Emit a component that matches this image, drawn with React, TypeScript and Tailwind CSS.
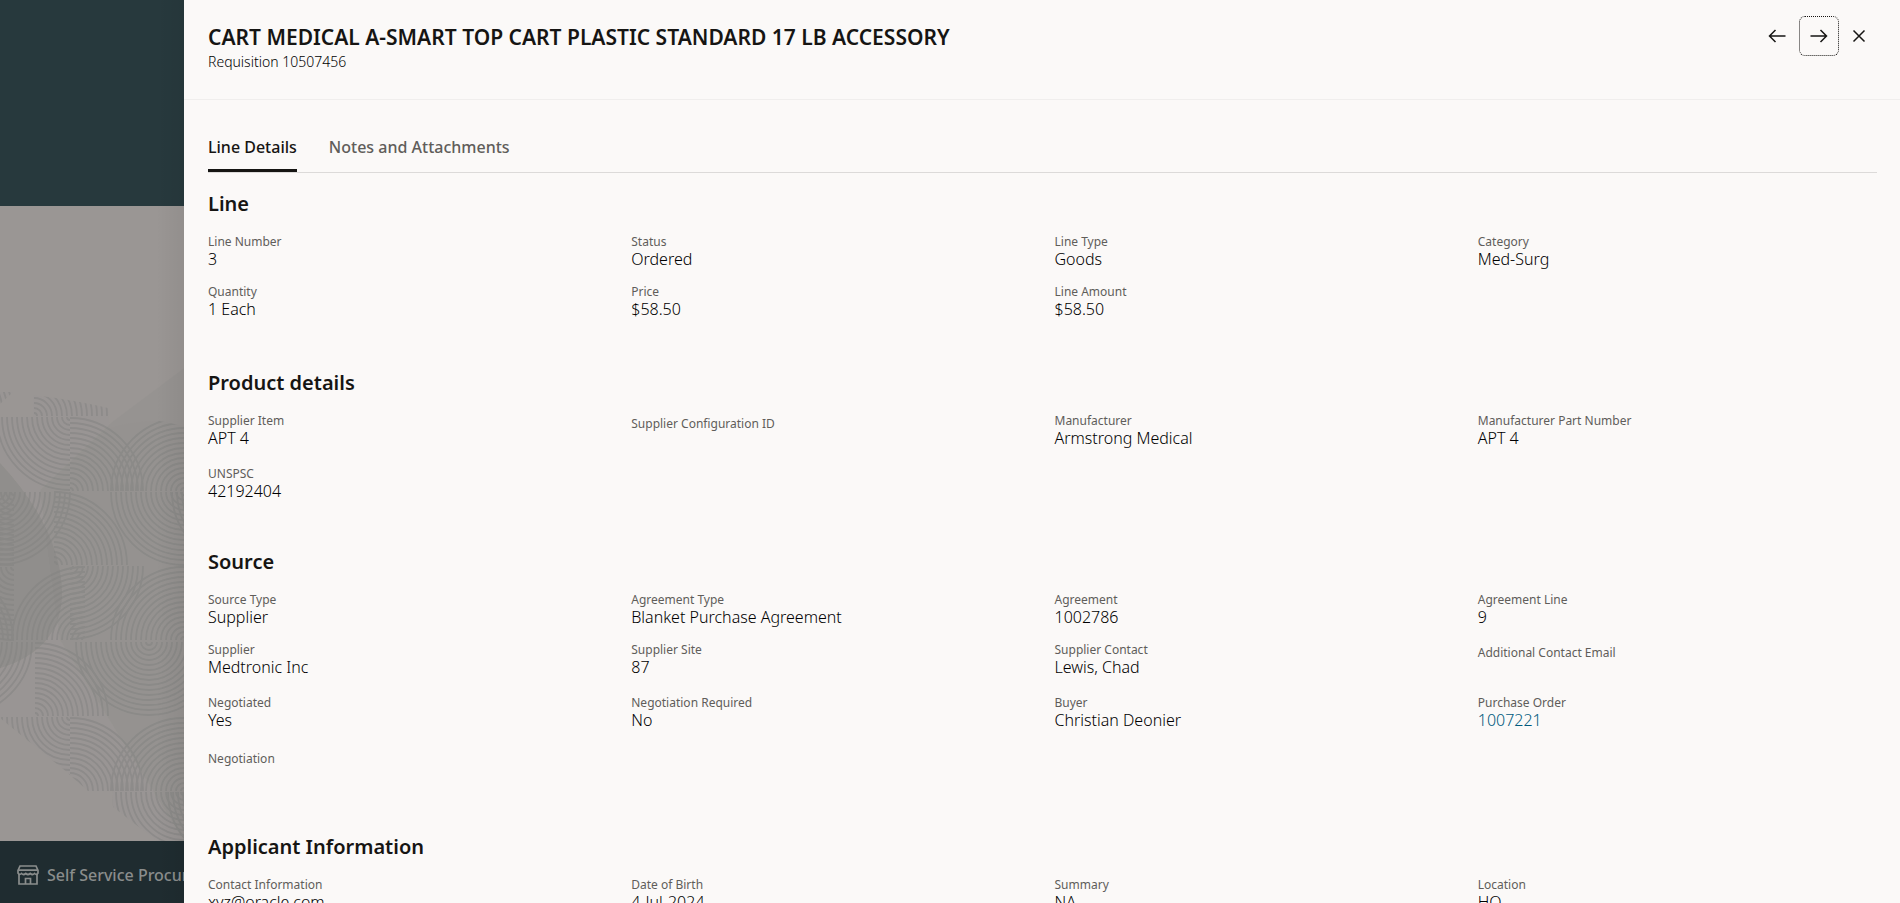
import { useState } from "react";

type Field = {
  label: string;
  value?: string;
  href?: string;
  tall?: boolean;
};

type SectionData = { title: string; fields: Field[] };

const sections: SectionData[] = [
  {
    title: "Line",
    fields: [
      { label: "Line Number", value: "3" },
      { label: "Status", value: "Ordered" },
      { label: "Line Type", value: "Goods" },
      { label: "Category", value: "Med-Surg" },
      { label: "Quantity", value: "1 Each", tall: true },
      { label: "Price", value: "$58.50", tall: true },
      { label: "Line Amount", value: "$58.50", tall: true },
    ],
  },
  {
    title: "Product details",
    fields: [
      { label: "Supplier Item", value: "APT 4" },
      { label: "Supplier Configuration ID" },
      { label: "Manufacturer", value: "Armstrong Medical" },
      { label: "Manufacturer Part Number", value: "APT 4" },
      { label: "UNSPSC", value: "42192404" },
    ],
  },
  {
    title: "Source",
    fields: [
      { label: "Source Type", value: "Supplier" },
      { label: "Agreement Type", value: "Blanket Purchase Agreement" },
      { label: "Agreement", value: "1002786" },
      { label: "Agreement Line", value: "9" },
      { label: "Supplier", value: "Medtronic Inc" },
      { label: "Supplier Site", value: "87" },
      { label: "Supplier Contact", value: "Lewis, Chad" },
      { label: "Additional Contact Email" },
      { label: "Negotiated", value: "Yes" },
      { label: "Negotiation Required", value: "No" },
      { label: "Buyer", value: "Christian Deonier" },
      { label: "Purchase Order", value: "1007221", href: "#purchase-order", tall: true },
      { label: "Negotiation" },
    ],
  },
  {
    title: "Applicant Information",
    fields: [
      { label: "Contact Information", value: "xyz@oracle.com" },
      { label: "Date of Birth", value: "4-Jul-2024" },
      { label: "Summary", value: "NA" },
      { label: "Location", value: "HQ" },
    ],
  },
];

type Quadrant = "ne" | "nw" | "se" | "sw";

// Quarter fans of concentric arcs: centre x, centre y, quadrant.
const fans: [number, number, Quadrant][] = [
  [-60, 416, "ne"],
  [34, 416, "ne"],
  [70, 417, "sw"],
  [70, 491, "ne"],
  [184, 491, "nw"],
  [-3, 492, "se"],
  [14, 492, "sw"],
  [54, 565, "ne"],
  [184, 492, "sw"],
  [245, 492, "sw"],
  [70, 566, "se"],
  [14, 567, "sw"],
  [85, 640, "nw"],
  [-60, 640, "ne"],
  [184, 640, "nw"],
  [-41, 642, "se"],
  [35, 716, "ne"],
  [149, 642, "sw"],
  [149, 642, "se"],
  [70, 717, "sw"],
  [70, 791, "ne"],
  [184, 791, "nw"],
  [184, 792, "sw"],
  [241, 792, "sw"],
];

const radii = [3, 8, 13, 18, 23, 28, 33, 38, 43, 48, 53, 58, 63, 68, 73];

function arc(cx: number, cy: number, r: number, q: Quadrant) {
  const sx = q === "ne" || q === "se" ? 1 : -1;
  const sy = q === "se" || q === "sw" ? 1 : -1;
  const sweep = sx * sy > 0 ? 1 : 0;
  return `M${cx + sx * r} ${cy}A${r} ${r} 0 0 ${sweep} ${cx} ${cy + sy * r}`;
}

function Pattern() {
  return (
    <svg
      className="block h-full w-full"
      viewBox="0 206 184 635"
      preserveAspectRatio="xMinYMin slice"
      aria-hidden="true"
    >
      <defs>
        <clipPath id="wave">
          <path d="M0 392H13L0 404V417H33V395Q75 400 108 408L110 428Q135 420 160 421L184 426V841H157L113 807L112 791H88L62 768L48 757L0 718Z" />
        </clipPath>
      </defs>
      <path d="M184 368L112 422L40 490L60 640L184 841Z" fill="#8f8e8b" opacity=".35" />
      <path d="M0 463Q62 530 62 595Q60 650 0 668Z" fill="#868684" opacity=".5" />
      <g clipPath="url(#wave)" fill="none" stroke="#838381" strokeWidth="1.8" opacity=".55">
        {fans.map(([cx, cy, q]) => (
          <path key={`${cx}-${cy}-${q}`} d={radii.map((r) => arc(cx, cy, r, q)).join("")} />
        ))}
      </g>
    </svg>
  );
}

function StoreIcon() {
  return (
    <svg
      className="h-5 w-[22px] shrink-0"
      viewBox="0 0 22 20"
      fill="none"
      stroke="currentColor"
      strokeWidth="1.7"
      aria-hidden="true"
    >
      <path d="M3 1H19L21 5.5V8Q19.5 10.5 17.5 8.5Q15.5 10.5 13.2 8.5Q11 10.5 8.8 8.5Q6.5 10.5 4.5 8.5Q2.5 10.5 1 8V5.5Z" />
      <path d="M1.5 5.2H20.5M2 9V19H20V9M8.5 19V13.5H13.5V19" />
    </svg>
  );
}

function Glyph({ d }: { d: string }) {
  return (
    <svg className="size-6" viewBox="0 0 24 24" fill="none" stroke="currentColor" strokeWidth="1.5" aria-hidden="true">
      <path d={d} />
    </svg>
  );
}

function FieldCell({ label, value, href, tall }: Field) {
  if (value === undefined) {
    return (
      <div className="min-h-[43px] pt-[3px]">
        <dt className="text-xs text-[#605d5a]">{label}</dt>
        <dd />
      </div>
    );
  }
  return (
    <div className={tall ? "min-h-[43px]" : "min-h-10"}>
      <dt className="text-xs text-[#605d5a]">{label}</dt>
      <dd className="text-base leading-[18px] font-light text-black">
        {href ? (
          <a href={href} className="text-[#005a7d]">
            {value}
          </a>
        ) : (
          value
        )}
      </dd>
    </div>
  );
}

const tabs = ["Line Details", "Notes and Attachments"];

export default function App() {
  const [active, setActive] = useState(tabs[0]);

  return (
    <div className="flex h-screen overflow-hidden bg-[#fbf9f8] font-['Noto_Sans','Open_Sans',sans-serif] text-[#161513]">
      <div className="relative flex w-[184px] shrink-0 flex-col overflow-hidden bg-[#9a9694]">
        <div className="h-[206px] shrink-0 bg-[#27393d]" />
        <div className="min-h-0 flex-1">
          <Pattern />
        </div>
        <div className="flex h-[62px] shrink-0 items-center gap-2 bg-[#1f2c30] pt-1.5 pl-[17px] whitespace-nowrap text-[#8a8d8c]">
          <StoreIcon />
          <span className="text-base font-medium">Self Service Procurement</span>
        </div>
        <div className="absolute inset-y-0 right-0 w-7 bg-linear-to-r from-transparent to-black/5" />
      </div>

      <main className="min-w-0 flex-1">
        <header className="flex h-[100px] items-start justify-between border-b border-[#f0eeed] pr-[21px] pl-6">
          <div className="pt-6">
            <h1 className="text-[21px] leading-[26px] font-semibold">
              CART MEDICAL A-SMART TOP CART PLASTIC STANDARD 17 LB ACCESSORY
            </h1>
            <p className="text-sm leading-6 font-light text-black">Requisition 10507456</p>
          </div>
          <div className="flex pt-4">
            <button type="button" aria-label="Previous line" className="flex size-10 items-center justify-center">
              <Glyph d="M20.5 12H4.5M10.5 6L4.5 12L10.5 18" />
            </button>
            <button
              type="button"
              aria-label="Next line"
              className="ml-0.5 flex size-10 items-center justify-center rounded-md border border-dotted border-[#161513]"
            >
              <Glyph d="M3.5 12H19.5M13.5 6L19.5 12L13.5 18" />
            </button>
            <button type="button" aria-label="Close" className="flex size-10 items-center justify-center">
              <Glyph d="M6.5 6.5L17.5 17.5M17.5 6.5L6.5 17.5" />
            </button>
          </div>
        </header>

        <div className="pr-[23px] pl-6">
          <div role="tablist" className="mt-6 flex h-[49px] gap-8 border-b border-[#dcdad9]">
            {tabs.map((tab) => (
              <button
                key={tab}
                type="button"
                role="tab"
                aria-selected={active === tab}
                onClick={() => setActive(tab)}
                className={
                  active === tab
                    ? "border-b-[3px] border-[#161513] text-base font-medium"
                    : "border-b-[3px] border-transparent text-base font-medium text-[#605d5a]"
                }
              >
                {tab}
              </button>
            ))}
          </div>

          <div className="flex flex-col gap-[42px] pt-[17px]">
            {sections.map((section) => (
              <section key={section.title}>
                <h2 className="text-xl leading-7 font-semibold">{section.title}</h2>
                <dl className="mt-4 grid grid-cols-4 gap-x-6 gap-y-2.5">
                  {section.fields.map((field) => (
                    <FieldCell key={field.label} {...field} />
                  ))}
                </dl>
              </section>
            ))}
          </div>
        </div>
      </main>
    </div>
  );
}
